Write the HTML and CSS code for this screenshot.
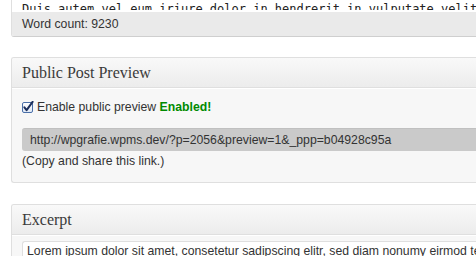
FILE: index.html
```html
<!DOCTYPE html>
<html>
<head>
<meta charset="utf-8">
<link rel="stylesheet" href="styles.css">
</head>
<body>
<div class="page">
  <div class="editor">
    <div class="editor-text"><div class="editor-clip">Duis autem vel eum iriure dolor in hendrerit in vulputate velit esse molestie consequat</div></div>
    <div class="wordcount">Word count: 9230</div>
  </div>

  <div class="postbox">
    <h3 class="hndle">Public Post Preview</h3>
    <div class="inside">
      <label class="check-row">
        <svg class="checkbox" width="12" height="12" viewBox="0 0 12 12">
          <defs>
            <linearGradient id="cb" x1="0" y1="0" x2="0" y2="1">
              <stop offset="0" stop-color="#ffffff"/>
              <stop offset="1" stop-color="#dfe8f5"/>
            </linearGradient>
          </defs>
          <rect x="0.5" y="1.5" width="10" height="10" rx="1.5" fill="url(#cb)" stroke="#4a6fa8"/>
          <path d="M2.4 6.4 L4.6 9.2 L10.6 0.8" fill="none" stroke="#1c2f5c" stroke-width="2" stroke-linecap="round" stroke-linejoin="round"/>
        </svg>
        <span>Enable public preview <span class="ok">Enabled!</span></span>
      </label>
      <div class="url">http://wpgrafie.wpms.dev/?p=2056&amp;preview=1&amp;_ppp=b04928c95a</div>
      <p class="hint">(Copy and share this link.)</p>
    </div>
  </div>

  <div class="postbox excerpt-box">
    <h3 class="hndle">Excerpt</h3>
    <div class="inside">
      <div class="excerpt-field">Lorem ipsum dolor sit amet, consetetur sadipscing elitr, sed diam nonumy eirmod tempor invidunt ut labore</div>
    </div>
  </div>
</div>
</body>
</html>
```
FILE: styles.css
```css
html, body {
  margin: 0;
  padding: 0;
  background: #ffffff;
  overflow: hidden;
}

body {
  width: 476px;
  height: 256px;
  font-family: "Liberation Sans", Arial, sans-serif;
  font-size: 12.25px;
  color: #333333;
}

.page {
  padding-left: 11px;
  width: 520px;
}

.editor {
  border-left: 1px solid #dfdfdf;
  border-bottom: 1px solid #cfcfcf;
  border-bottom-left-radius: 3px;
  overflow: hidden;
}

.editor-text {
  background: #ffffff;
  padding: 0 0 2px 10px;
}

.editor-clip {
  height: 8px;
  padding-top: 2px;
  overflow: hidden;
  font-family: "DejaVu Sans Mono", monospace;
  font-size: 12px;
  line-height: 14px;
  white-space: nowrap;
  color: #222222;
}

.wordcount {
  height: 24px;
  line-height: 24px;
  padding-left: 10px;
  background: #eaeaea;
  white-space: nowrap;
}

.postbox {
  margin-top: 20px;
  border: 1px solid #dfdfdf;
  border-right: none;
  border-radius: 3px 0 0 3px;
  background: #f7f7f7;
  overflow: hidden;
}

.excerpt-box {
  margin-top: 21px;
}

.hndle {
  margin: 0;
  height: 29px;
  line-height: 29px;
  padding-left: 10px;
  font-family: "Liberation Serif", Georgia, serif;
  font-size: 16px;
  font-weight: normal;
  color: #3a3a3a;
  background: linear-gradient(to bottom, #f9f9f9, #ececec);
  border-bottom: 1px solid #dfdfdf;
  box-shadow: 0 1px 0 #ffffff;
}

.inside {
  padding: 11px 0 14px 10px;
}

.check-row {
  display: flex;
  align-items: center;
  height: 16px;
  white-space: nowrap;
}

.checkbox {
  margin-right: 3px;
  flex: none;
}

.ok {
  color: #008a00;
  font-weight: bold;
}

.url {
  margin-top: 13px;
  height: 23px;
  line-height: 23px;
  padding-left: 8px;
  background: #cacaca;
  border-top: 1px solid #c0c0c0;
  box-sizing: border-box;
  border-radius: 3px 0 0 3px;
  color: #333333;
  white-space: nowrap;
}

.hint {
  margin: 3px 0 0 0;
  line-height: 14px;
  white-space: nowrap;
}

.excerpt-box .inside {
  padding: 6px 0 20px 10px;
}

.excerpt-field {
  background: #ffffff;
  border: 1px solid #dfdfdf;
  border-right: none;
  border-radius: 3px 0 0 3px;
  padding: 2px 0 10px 4px;
  line-height: 14px;
  white-space: nowrap;
  color: #333333;
}
```
